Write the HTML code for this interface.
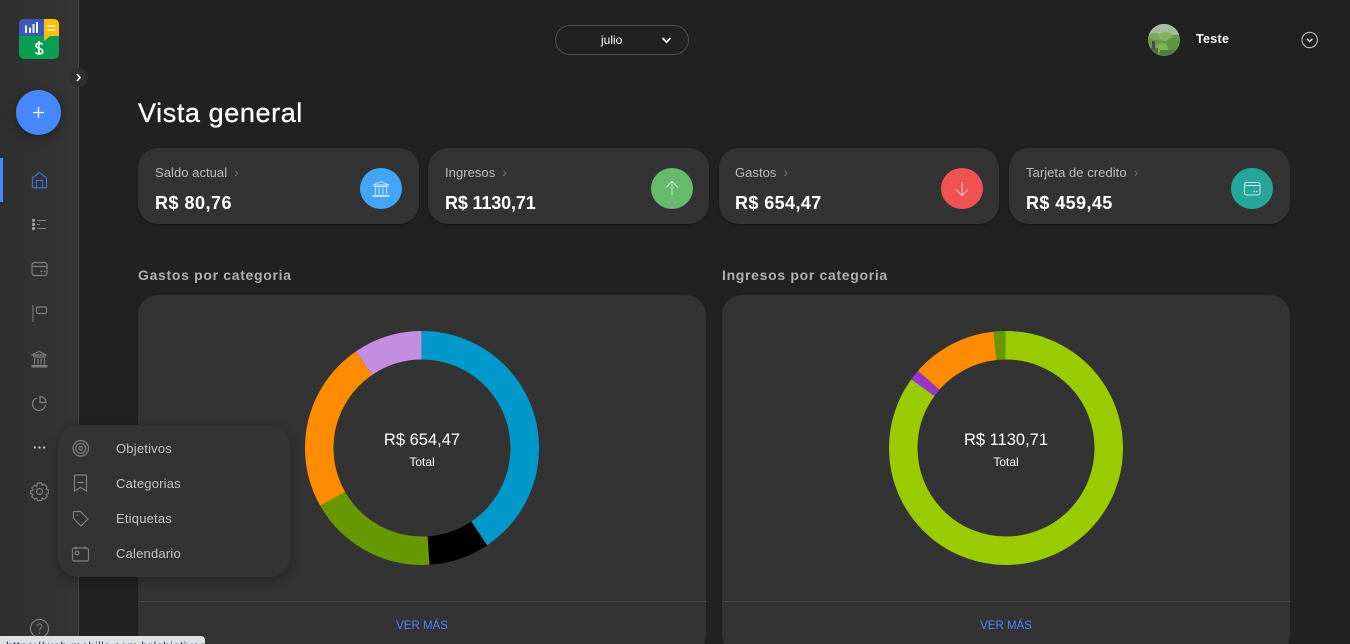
<!DOCTYPE html>
<html lang="es"><head><meta charset="utf-8"><title>Vista general</title>
<style>
*{box-sizing:border-box}
html,body{margin:0;padding:0;width:1350px;height:644px;overflow:hidden;background:#212121;font-family:"Liberation Sans",sans-serif;color:#fff}
#root{position:relative;width:1350px;height:644px;overflow:hidden;background:#212121}
.a{position:absolute;white-space:nowrap}
#side{left:0;top:0;width:79px;height:644px;background:linear-gradient(90deg,#2f2f2f,#343434);border-right:1px solid #474747}
.card{position:absolute;top:148px;height:76px;background:#333;border-radius:20px;box-shadow:0 1px 2px rgba(0,0,0,.35)}
.lbl{position:absolute;left:17px;top:17px;font-size:13px;line-height:15px;color:#bdbdbd;letter-spacing:.05px;white-space:nowrap}
.lbl i{font-style:normal;color:#6f6f6f;margin-left:7px;font-size:14px}
.val{position:absolute;left:17px;top:45px;font-size:18px;line-height:20px;font-weight:700;letter-spacing:.4px;white-space:nowrap}
.dot{position:absolute;left:222px;top:20px;width:42px;height:41px;border-radius:50%}
.panel{position:absolute;top:295px;width:568px;height:360px;background:#333;border-radius:20px}
.panel hr{position:absolute;left:0;right:0;top:306px;margin:0;border:0;border-top:1px solid #454545}
.more{position:absolute;left:0;right:0;top:323px;text-align:center;font-size:11.5px;line-height:15px;color:#4d85ff}
.h2{font-size:14px;line-height:16px;font-weight:700;color:#b0b0b0;letter-spacing:.68px}
.ct{position:absolute;left:0;right:0;text-align:center}
#menu{left:58px;top:425px;width:232px;height:152px;background:#333;border-radius:20px;box-shadow:0 4px 12px rgba(0,0,0,.3)}
.mi{position:absolute;left:58px;font-size:13px;line-height:15px;color:#c4c4c4;letter-spacing:.2px}
svg{position:absolute;overflow:visible}
.s{fill:none;stroke:#808080;stroke-width:1.2}
</style></head><body>
<div id="root">

<div class="a" id="side"></div>

<!-- logo -->
<svg style="left:0;top:0" width="79" height="140">
<defs><clipPath id="lg"><rect x="19" y="19" width="40" height="40" rx="5"/></clipPath></defs>
<g clip-path="url(#lg)">
<rect x="19" y="19" width="40" height="40" fill="#0a9f50"/>
<rect x="19" y="19" width="25" height="17" fill="#3c58b8"/>
<path d="M44 19H59V36H50L44 41Z" fill="#fdc00f"/>
<path d="M25 25.500h2V33h-2zM29 27.500h2V33h-2zM32.500 24h2v9h-2zM36 22h2v11h-2z" fill="#eef1fa"/>
<path d="M47.700 25.300h7.500v1.500h-7.500zM47.700 29.200h7.500v1.500h-7.500z" fill="#fff6d0"/>
</g>
<path d="M42.500 44.500c-1-1.600-6.300-2-6.500 1-.2 3 6.700 2.500 6.700 6 0 3-5.700 3-7.200 1M39 41v14" fill="none" stroke="#fff" stroke-width="1.600"/>
<circle cx="38.500" cy="112.500" r="22.500" fill="#4688fd" style="filter:drop-shadow(0 3px 5px rgba(0,0,0,.35))"/>
<path d="M33 112.500h11M38.500 107v11" stroke="#fff" stroke-width="1.300"/>
</svg>

<div class="a" style="left:69px;top:68px;width:19px;height:19px;border-radius:50%;background:#2f2f2f"></div>
<svg style="left:69px;top:68px" width="19" height="19"><path d="M8 6l3 3.500-3 3.500" fill="none" stroke="#eee" stroke-width="1.700"/></svg>

<div class="a" style="left:0;top:158px;width:3px;height:44px;background:#4688fd"></div>

<!-- nav icons -->
<svg style="left:0;top:0" width="79" height="644">
<path d="M39.500 172.500l7 5.500v8.500c0 .8-.6 1.300-1.300 1.300H33.800c-.7 0-1.300-.5-1.300-1.300V178zM36.500 187.500v-7h6v7" fill="none" stroke="#3c6fc4" stroke-width="1.300"/>
<g fill="#a0a0a0"><circle cx="33.500" cy="220.300" r="1.600"/><circle cx="33.500" cy="224.400" r="1.600"/><circle cx="33.500" cy="228.500" r="1.600"/></g>
<path d="M37 220.500h9M37 224.500h3M37 228.500h9" stroke="#808080"/>
<rect x="32" y="262.500" width="15" height="13" rx="2.500" class="s"/><path d="M32 266.500h15" class="s"/><path d="M40.500 271.500h2M44 271.500h1.500" stroke="#808080" stroke-width="1.500"/>
<path d="M33 305v17" stroke="#707070" stroke-width="1.300"/><rect x="36.500" y="307" width="10" height="6.500" rx="1.500" class="s"/>
<path d="M39 351.500l7.500 3.500h-15zM33 357h13M34.500 358.500v6M38 358.500v6M41 358.500v6M44.500 358.500v6" class="s"/><path d="M32 365.500h15v1.500H32z" fill="#808080" stroke="#808080"/>
<path d="M36.500 398a6.500 6.500 0 1 0 9 6.500" class="s"/><path d="M40 396.500a6 6 0 0 1 6 6h-6z" class="s"/>
<g fill="#ccc"><circle cx="34.800" cy="447.500" r="1.100"/><circle cx="39.500" cy="447.500" r="1.100"/><circle cx="44.200" cy="447.500" r="1.100"/></g>
<circle cx="39.500" cy="491.500" r="3" class="s"/>
<path d="M37.500 483h4l.7 2.300 2.200-1 2.700 2.700-1 2.200 2.300.8v3.500l-2.300.9 1 2.200-2.700 2.600-2.200-1-.7 2.300h-4l-.7-2.300-2.200 1-2.700-2.600 1-2.200-2.300-.9V491l2.300-.8-1-2.200 2.700-2.700 2.200 1z" class="s"/>
<circle cx="39.500" cy="628.500" r="9" class="s"/>
<path d="M37 626.500c0-3.500 5-3.500 5-.3 0 2-2.500 2-2.500 4" fill="none" stroke="#808080"/><circle cx="39.500" cy="633" r=".8" fill="#808080"/>
</svg>

<!-- header -->
<div class="a" style="left:555px;top:25px;width:134px;height:30px;border:1px solid #505050;border-radius:15px"></div>
<div class="a" style="left:601px;top:33px;font-size:12px;line-height:14px;color:#fff">julio</div>
<svg style="left:655px;top:33px" width="22" height="14"><path d="M7.500 5l4 4.200 4-4.200" fill="none" stroke="#fff" stroke-width="1.700"/></svg>

<div class="a" style="left:1148px;top:24px;width:32px;height:32px;border-radius:50%;overflow:hidden;background:#6a9a48">
<div style="position:absolute;left:0;top:0;width:32px;height:11px;background:linear-gradient(180deg,#a6bfa6,#9fbb98)"></div>
<div style="position:absolute;left:0;top:9px;width:14px;height:7px;border-radius:50%;background:#7ea566"></div>
<div style="position:absolute;left:10px;top:8px;width:14px;height:9px;border-radius:50%;background:#82b25a"></div>
<div style="position:absolute;left:18px;top:14px;width:14px;height:12px;border-radius:50%;background:#5f9440"></div>
<div style="position:absolute;left:8px;top:19px;width:12px;height:10px;border-radius:50%;background:#7fb052"></div>
<div style="position:absolute;left:12px;top:26px;width:16px;height:6px;background:#4f8038"></div>
<div style="position:absolute;left:0;top:24px;width:10px;height:8px;background:#4c7438"></div>
<div style="position:absolute;left:4px;top:17px;width:3px;height:8px;background:#4a4a4a"></div>
</div>
<div class="a" style="left:1196px;top:32px;font-size:12.500px;line-height:15px;font-weight:700;letter-spacing:.3px">Teste</div>
<svg style="left:1301px;top:31px" width="18" height="18"><circle cx="8.700" cy="9" r="7.700" fill="none" stroke="#bbb" stroke-width="1.100"/><path d="M6 7.800l2.700 2.700 2.700-2.700" fill="none" stroke="#ddd" stroke-width="1.500"/></svg>

<div class="a" style="left:138px;top:97px;font-size:27px;line-height:32px;letter-spacing:.6px;color:#fff;-webkit-text-stroke:.3px #fff">Vista general</div>

<!-- cards -->
<div class="card" style="left:138px;width:281px"><div class="lbl">Saldo actual<i>›</i></div><div class="val" style="letter-spacing:.5px">R$ 80,76</div>
<div class="dot" style="background:#42a5f5"></div>
<svg style="left:222px;top:20px" width="42" height="41"><path d="M21 13.500l8 3.500H13zM14 18.500h14M15.500 19.500v7M19 19.500v7M23 19.500v7M26.500 19.500v7" fill="none" stroke="#d4e9fb" stroke-width=".9"/><rect x="12.500" y="27" width="17" height="2" fill="#bcdcf8"/></svg></div>

<div class="card" style="left:428px;width:281px"><div class="lbl">Ingresos<i>›</i></div><div class="val" style="letter-spacing:-.15px">R$ 1130,71</div>
<div class="dot" style="left:223px;background:#66bb6a"></div>
<svg style="left:223px;top:20px" width="42" height="41"><path d="M21 27v-13.500M15 19.500l6-6 6 6" fill="none" stroke="#dff1e0" stroke-width=".8"/></svg></div>

<div class="card" style="left:719px;width:280px"><div class="lbl" style="left:16px">Gastos<i>›</i></div><div class="val" style="left:16px">R$ 654,47</div>
<div class="dot" style="background:#ef5350"></div>
<svg style="left:222px;top:20px" width="42" height="41"><path d="M21 14v13.500M15 21.500l6 6 6-6" fill="none" stroke="#fde3e2" stroke-width=".8"/></svg></div>

<div class="card" style="left:1009px;width:281px"><div class="lbl">Tarjeta de credito<i>›</i></div><div class="val">R$ 459,45</div>
<div class="dot" style="background:#26a69a"></div>
<svg style="left:222px;top:20px" width="42" height="41"><rect x="13.500" y="14.500" width="15.500" height="12.500" rx="2" fill="none" stroke="#c8ebe7" stroke-width="1"/><path d="M13.500 17.500h15.500" stroke="#c8ebe7"/><path d="M22.500 23.500h1.500M25 23.500h1.500" stroke="#c8ebe7" stroke-width="1.200"/></svg></div>

<!-- sections -->
<div class="a h2" style="left:138px;top:267px">Gastos por categoria</div>
<div class="a h2" style="left:722px;top:267px">Ingresos por categoria</div>

<div class="panel" style="left:138px"><hr><div class="more" style="top:324px">VER MÁS</div>
<svg style="left:167px;top:36px" width="234" height="234" viewBox="0 0 234 234">
<g transform="rotate(-90 117 117)" fill="none" stroke-width="28.500">
<circle cx="117" cy="117" r="102.750" pathLength="360" stroke="#0099cc" stroke-dasharray="146.300 213.700"/>
<circle cx="117" cy="117" r="102.750" pathLength="360" stroke="#000000" stroke-dasharray="30.200 329.800" stroke-dashoffset="-146.300"/>
<circle cx="117" cy="117" r="102.750" pathLength="360" stroke="#669900" stroke-dasharray="64.100 295.900" stroke-dashoffset="-176.500"/>
<circle cx="117" cy="117" r="102.750" pathLength="360" stroke="#ff8c00" stroke-dasharray="85.300 274.700" stroke-dashoffset="-240.600"/>
<circle cx="117" cy="117" r="102.750" pathLength="360" stroke="#c58de0" stroke-dasharray="34.100 325.900" stroke-dashoffset="-325.900"/>
</g></svg>
<div class="ct" style="top:134px;font-size:16.500px;line-height:22px;color:#fff">R$ 654,47</div>
<div class="ct" style="top:160px;font-size:12px;line-height:14px;color:#fff">Total</div>
</div>

<div class="panel" style="left:722px"><hr><div class="more" style="top:324px">VER MÁS</div>
<svg style="left:167px;top:36px" width="234" height="234" viewBox="0 0 234 234">
<g transform="rotate(-90 117 117)" fill="none" stroke-width="28.500">
<circle cx="117" cy="117" r="102.750" pathLength="360" stroke="#99cc00" stroke-dasharray="306.300 53.700"/>
<circle cx="117" cy="117" r="102.750" pathLength="360" stroke="#9933cc" stroke-dasharray="5.200 354.800" stroke-dashoffset="-306.300"/>
<circle cx="117" cy="117" r="102.750" pathLength="360" stroke="#ff8c00" stroke-dasharray="42.700 317.300" stroke-dashoffset="-311.500"/>
<circle cx="117" cy="117" r="102.750" pathLength="360" stroke="#669900" stroke-dasharray="5.800 354.200" stroke-dashoffset="-354.200"/>
</g></svg>
<div class="ct" style="top:134px;font-size:16.500px;line-height:22px;color:#fff">R$ 1130,71</div>
<div class="ct" style="top:160px;font-size:12px;line-height:14px;color:#fff">Total</div>
</div>

<!-- popup menu -->
<div class="a" id="menu">
<div class="mi" style="top:16px">Objetivos</div>
<div class="mi" style="top:51px">Categorias</div>
<div class="mi" style="top:86px">Etiquetas</div>
<div class="mi" style="top:121px">Calendario</div>
<svg style="left:0;top:0" width="60" height="152">
<circle cx="22.700" cy="23.300" r="7.800" class="s"/><circle cx="22.700" cy="23.300" r="5" class="s"/><circle cx="22.700" cy="23.300" r="1.800" class="s"/>
<path d="M16.500 66V51.300c0-.7.500-1.300 1.300-1.300h9.400c.8 0 1.300.6 1.300 1.300V66l-6-3.500zM19.500 57.500h6" class="s"/>
<path d="M15.500 86.500h7l7.500 7.500-7 7-7.500-7.500z" class="s" stroke-linejoin="round"/><circle cx="19" cy="90" r=".7" fill="#808080"/>
<rect x="14.500" y="123" width="16" height="13" rx="2" class="s"/><path d="M18 121.500v2.500M27 121.500v2.500" class="s"/><circle cx="19" cy="128" r="1.800" class="s"/>
</svg>
</div>

<!-- status bubble -->
<div class="a" style="left:0;top:636px;width:205px;height:8px;background:#dfe1e5;border-top-right-radius:4px;overflow:hidden">
<div class="a" style="left:6px;top:3px;font-size:12px;line-height:14px;color:#3a3a5a;letter-spacing:.3px">https://web.mobills.com.br/objetivos</div>
</div>

</div>
</body></html>
